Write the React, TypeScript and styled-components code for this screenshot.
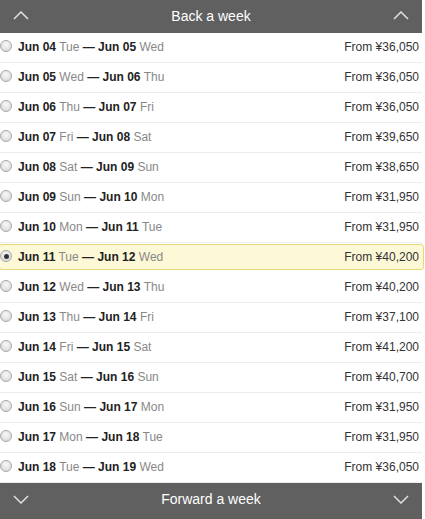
import React from "react";
import styled, { createGlobalStyle } from "styled-components";

const GlobalStyle = createGlobalStyle`
  html, body {
    margin: 0;
    padding: 0;
    background: #fff;
    font-family: "Liberation Sans", Arial, sans-serif;
  }
`;

const Wrapper = styled.div`
  width: 422px;
`;

const NavBar = styled.div`
  height: 33px;
  background: #606060;
  color: #fff;
  display: flex;
  align-items: center;
  justify-content: space-between;
  padding: 0 13px 2px;
  box-sizing: border-box;
  font-size: 14px;
  cursor: pointer;
`;

const NavFooter = styled(NavBar)`
  height: 36px;
  padding-bottom: 4px;
`;

const List = styled.ul`
  list-style: none;
  margin: 0;
  padding: 0;
`;

const Row = styled.li<{ $selected?: boolean }>`
  height: 30px;
  box-sizing: border-box;
  display: flex;
  align-items: center;
  padding: 0 3px 2px 0;
  font-size: 12px;
  border-bottom: 1px solid #ececec;
  ${({ $selected }) =>
    $selected &&
    `
    background: #fdf8d6;
    border: 1px solid #e6d77a;
    border-radius: 3px;
    height: 26px;
    margin: 1px -2px 3px -1px;
    padding-right: 4px;
    padding-bottom: 0;
  `}
`;

const Radio = styled.span<{ $checked?: boolean }>`
  width: 12px;
  height: 12px;
  border-radius: 50%;
  box-sizing: border-box;
  border: 1px solid #a8a8a8;
  background: radial-gradient(circle at 50% 35%, #f8f8f8 0%, #d4d4d4 100%);
  margin: -2px 6px 0 0;
  display: flex;
  align-items: center;
  justify-content: center;
  flex-shrink: 0;

  &::after {
    content: "";
    width: 5px;
    height: 5px;
    border-radius: 50%;
    background: ${({ $checked }) => ($checked ? "#333" : "transparent")};
  }
`;

const Dates = styled.span`
  flex: 1;
  color: #222;
`;

const DateLabel = styled.b`
  color: #222;
`;

const Day = styled.span`
  color: #888;
`;

const Price = styled.span`
  color: #333;
`;

const Chevron = ({ up }: { up?: boolean }) => (
  <svg width="16" height="9" viewBox="0 0 16 9" fill="none">
    <polyline
      points={up ? "1,8 8,1 15,8" : "1,1 8,8 15,1"}
      stroke="#e0e0e0"
      strokeWidth="1.5"
    />
  </svg>
);

type Trip = {
  out: string;
  outDay: string;
  back: string;
  backDay: string;
  price: string;
};

const days = ["Tue", "Wed", "Thu", "Fri", "Sat", "Sun", "Mon"];
const prices = [
  "36,050", "36,050", "36,050", "39,650", "38,650", "31,950", "31,950",
  "40,200", "40,200", "37,100", "41,200", "40,700", "31,950", "31,950", "36,050",
];

const trips: Trip[] = prices.map((price, i) => {
  const pad = (n: number) => String(n).padStart(2, "0");
  return {
    out: `Jun ${pad(4 + i)}`,
    outDay: days[i % 7],
    back: `Jun ${pad(5 + i)}`,
    backDay: days[(i + 1) % 7],
    price,
  };
});

const SELECTED = 7;

export default function App() {
  return (
    <Wrapper>
      <GlobalStyle />
      <NavBar>
        <Chevron up />
        <span>Back a week</span>
        <Chevron up />
      </NavBar>
      <List>
        {trips.map((t, i) => (
          <Row key={t.out} $selected={i === SELECTED}>
            <Radio $checked={i === SELECTED} />
            <Dates>
              <DateLabel>{t.out}</DateLabel> <Day>{t.outDay}</Day>{" "}
              <DateLabel>—</DateLabel> <DateLabel>{t.back}</DateLabel>{" "}
              <Day>{t.backDay}</Day>
            </Dates>
            <Price>From ¥{t.price}</Price>
          </Row>
        ))}
      </List>
      <NavFooter>
        <Chevron />
        <span>Forward a week</span>
        <Chevron />
      </NavFooter>
    </Wrapper>
  );
}
